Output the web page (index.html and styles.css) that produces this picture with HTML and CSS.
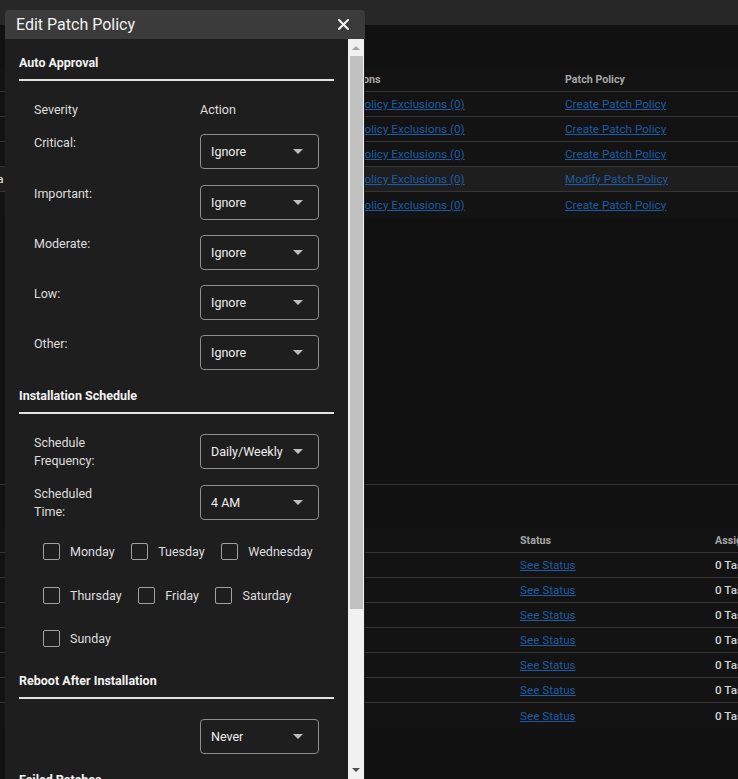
FILE: index.html
```html
<!DOCTYPE html>
<html lang="en">
<head>
<meta charset="utf-8">
<title>Edit Patch Policy</title>
<link rel="stylesheet" href="styles.css">
</head>
<body>
<div class="page">
  <header class="topbar"></header>
  <main class="main">
    <div class="content">
      <div class="grid grid-top">
        <div class="row head"><span>Group</span><span>Exclusions</span><span>Patch Policy</span></div>
        <div class="row"><span class="cell">Servers</span><a href="#">View Policy Exclusions (0)</a><a href="#">Create Patch Policy</a></div>
        <div class="row"><span class="cell">Laptops</span><a href="#">View Policy Exclusions (0)</a><a href="#">Create Patch Policy</a></div>
        <div class="row"><span class="cell">Kiosks</span><a href="#">View Policy Exclusions (0)</a><a href="#">Create Patch Policy</a></div>
        <div class="row active"><span class="cell">Ops Alpha</span><a href="#">View Policy Exclusions (0)</a><a href="#">Modify Patch Policy</a></div>
        <div class="row"><span class="cell">Finance</span><a href="#">View Policy Exclusions (0)</a><a href="#">Create Patch Policy</a></div>
      </div>

      <div class="panel">
        <div class="grid grid-bottom">
          <div class="row head"><span>Policy</span><span>Status</span><span>Assigned Tasks</span></div>
          <div class="row"><span class="cell">Servers</span><a href="#">See Status</a><span class="cell">0 Tasks</span></div>
          <div class="row"><span class="cell">Laptops</span><a href="#">See Status</a><span class="cell">0 Tasks</span></div>
          <div class="row"><span class="cell">Kiosks</span><a href="#">See Status</a><span class="cell">0 Tasks</span></div>
          <div class="row"><span class="cell">Finance</span><a href="#">See Status</a><span class="cell">0 Tasks</span></div>
          <div class="row"><span class="cell">Lab</span><a href="#">See Status</a><span class="cell">0 Tasks</span></div>
          <div class="row"><span class="cell">Sales</span><a href="#">See Status</a><span class="cell">0 Tasks</span></div>
          <div class="row"><span class="cell">Ops</span><a href="#">See Status</a><span class="cell">0 Tasks</span></div>
        </div>
      </div>
    </div>
  </main>

  <div class="modal">
    <div class="modal-header">
      <span class="modal-title">Edit Patch Policy</span>
      <svg class="close" width="11" height="11" viewBox="0 0 11 11"><path d="M1 1 L10 10 M10 1 L1 10" stroke="#f4f4f4" stroke-width="2" stroke-linecap="square" fill="none"/></svg>
    </div>
    <div class="modal-body">
      <div class="modal-content">
        <section class="section">
          <h2 class="section-title">Auto Approval</h2>
          <div class="section-body">
            <div class="form-row head"><span class="label">Severity</span><span class="label">Action</span></div>
            <div class="form-row"><span class="label">Critical:</span><div class="select"><span>Ignore</span><svg class="caret" viewBox="0 0 10 5"><path d="M0 0 H10 L5 5 Z"/></svg></div></div>
            <div class="form-row"><span class="label">Important:</span><div class="select"><span>Ignore</span><svg class="caret" viewBox="0 0 10 5"><path d="M0 0 H10 L5 5 Z"/></svg></div></div>
            <div class="form-row"><span class="label">Moderate:</span><div class="select"><span>Ignore</span><svg class="caret" viewBox="0 0 10 5"><path d="M0 0 H10 L5 5 Z"/></svg></div></div>
            <div class="form-row"><span class="label">Low:</span><div class="select"><span>Ignore</span><svg class="caret" viewBox="0 0 10 5"><path d="M0 0 H10 L5 5 Z"/></svg></div></div>
            <div class="form-row"><span class="label">Other:</span><div class="select"><span>Ignore</span><svg class="caret" viewBox="0 0 10 5"><path d="M0 0 H10 L5 5 Z"/></svg></div></div>
          </div>
        </section>

        <section class="section">
          <h2 class="section-title">Installation Schedule</h2>
          <div class="section-body">
            <div class="form-row"><span class="label">Schedule Frequency:</span><div class="select"><span>Daily/Weekly</span><svg class="caret" viewBox="0 0 10 5"><path d="M0 0 H10 L5 5 Z"/></svg></div></div>
            <div class="form-row"><span class="label">Scheduled Time:</span><div class="select"><span>4 AM</span><svg class="caret" viewBox="0 0 10 5"><path d="M0 0 H10 L5 5 Z"/></svg></div></div>
            <div class="days">
              <label class="day"><span class="box"></span>Monday</label>
              <label class="day"><span class="box"></span>Tuesday</label>
              <label class="day"><span class="box"></span>Wednesday</label>
              <label class="day"><span class="box"></span>Thursday</label>
              <label class="day"><span class="box"></span>Friday</label>
              <label class="day"><span class="box"></span>Saturday</label>
              <label class="day"><span class="box"></span>Sunday</label>
            </div>
          </div>
        </section>

        <section class="section">
          <h2 class="section-title">Reboot After Installation</h2>
          <div class="section-body">
            <div class="form-row"><span class="label"></span><div class="select"><span>Never</span><svg class="caret" viewBox="0 0 10 5"><path d="M0 0 H10 L5 5 Z"/></svg></div></div>
          </div>
        </section>

        <section class="section">
          <h2 class="section-title">Failed Patches</h2>
          <div class="section-body">
            <div class="form-row"><span class="label">Retry:</span><div class="select"><span>Never</span><svg class="caret" viewBox="0 0 10 5"><path d="M0 0 H10 L5 5 Z"/></svg></div></div>
          </div>
        </section>
      </div>
      <div class="scrollbar">
        <div class="sb-btn up"><svg width="8" height="4" viewBox="0 0 8 4"><path d="M0 4 L4 0 L8 4 Z" fill="#a3a3a3"/></svg></div>
        <div class="sb-thumb"></div>
        <div class="sb-space"></div>
        <div class="sb-btn down"><svg width="8" height="4" viewBox="0 0 8 4"><path d="M0 0 L8 0 L4 4 Z" fill="#505050"/></svg></div>
      </div>
    </div>
  </div>
</div>
</body>
</html>
```

FILE: styles.css
```css
* { box-sizing: border-box; }

html, body {
  margin: 0;
  height: 100%;
  overflow: hidden;
}

body {
  font-family: Roboto, "Liberation Sans", Arial, sans-serif;
  background: #111111;
  color: #cccccc;
}

.page {
  position: relative;
  height: 100%;
  display: flex;
  flex-direction: column;
}

.topbar {
  flex: none;
  height: 25px;
  background: #272727;
}

.main {
  flex: 1;
  min-height: 0;
  overflow: hidden;
  background: #111111;
}

.content {
  margin-left: -58px;
  width: 900px;
}

/* background tables */
.grid {
  background: #131313;
  font-size: 11.7px;
}

.grid-top {
  margin-top: 42px;
}

.row {
  display: grid;
  height: 25px;
  align-items: center;
  border-bottom: 1px solid #353535;
  white-space: nowrap;
}

.row:last-child {
  border-bottom: none;
}

.grid-top .row {
  grid-template-columns: 379px 236px 1fr;
}

.grid-bottom .row {
  grid-template-columns: 570px 195px 1fr;
}

.row > * {
  padding: 0 8px;
  overflow: hidden;
}

.row.head {
  font-size: 10.7px;
  font-weight: 700;
  color: #a6a6a6;
}

.row.active {
  background: #1e1e1e;
}

.row a {
  color: #1d5ba3;
  text-decoration: underline;
  justify-self: start;
}

.cell {
  color: #d4d4d4;
  font-weight: 500;
}

.panel {
  margin-top: 267px;
  border-top: 1px solid #333333;
  padding-top: 43px;
}

/* modal */
.modal {
  position: absolute;
  left: 5px;
  top: 10px;
  width: 360px;
  height: 769px;
  display: flex;
  flex-direction: column;
  border-radius: 4px 4px 0 0;
  overflow: hidden;
}

.modal-header {
  flex: none;
  height: 29px;
  background: #3b3b3b;
  display: flex;
  align-items: center;
  justify-content: space-between;
  padding: 0 16px 0 11px;
}

.modal-title {
  font-size: 16px;
  color: #f2f2f2;
}

.close {
  display: block;
}

.modal-body {
  flex: 1;
  min-height: 0;
  display: flex;
  background: #1e1e1e;
  padding-right: 1px;
}

.modal-content {
  flex: 1;
  min-width: 0;
  padding: 16.4px 14px 0;
  overflow: hidden;
}

.section + .section {
  margin-top: 17.7px;
}

.section-title {
  margin: 0;
  font-size: 12.5px;
  font-weight: 700;
  line-height: 15px;
  padding-bottom: 8.5px;
  border-bottom: 2px solid #e2e2e2;
  color: #f2f2f2;
}

.section-body {
  display: flex;
  flex-direction: column;
  gap: 15.3px;
  padding: 20.7px 0 0 15px;
}

.form-row {
  display: grid;
  grid-template-columns: 166px 119px;
  grid-template-rows: 35px;
  align-items: start;
}

.form-row.head {
  grid-template-rows: 16px;
  margin-bottom: 1.4px;
}

.label {
  width: 80px;
  font-size: 12.5px;
  line-height: 18px;
  color: #dedede;
}

.form-row.head .label {
  line-height: 16px;
}

.select {
  height: 35px;
  display: flex;
  align-items: center;
  padding: 0 15px 0 10px;
  border: 1px solid #8e8e8e;
  border-radius: 4px;
  font-size: 12.5px;
  color: #eeeeee;
}

.caret {
  margin-left: auto;
  width: 10px;
  height: 5px;
  fill: #bdbdbd;
  flex: none;
}

.days {
  display: flex;
  flex-wrap: wrap;
  column-gap: 16.6px;
  row-gap: 25.7px;
  margin: 7.7px 0 7.4px 9px;
}

.day {
  display: flex;
  align-items: center;
  gap: 10px;
  height: 18px;
  font-size: 12.5px;
  color: #dedede;
}

.box {
  width: 17px;
  height: 17px;
  border: 1px solid #a0a0a0;
  border-radius: 2px;
}

/* scrollbar */
.scrollbar {
  flex: none;
  width: 16px;
  background: #f1f1f1;
  display: flex;
  flex-direction: column;
}

.sb-btn {
  display: flex;
  align-items: center;
  justify-content: center;
}

.sb-btn svg {
  display: block;
}

.sb-btn.up {
  height: 17px;
}

.sb-btn.down {
  height: 15px;
  margin-bottom: 2px;
}

.sb-thumb {
  height: 553px;
  margin: 0 1px 0 2px;
  background: #c1c1c1;
}

.sb-space {
  flex: 1;
}
```
